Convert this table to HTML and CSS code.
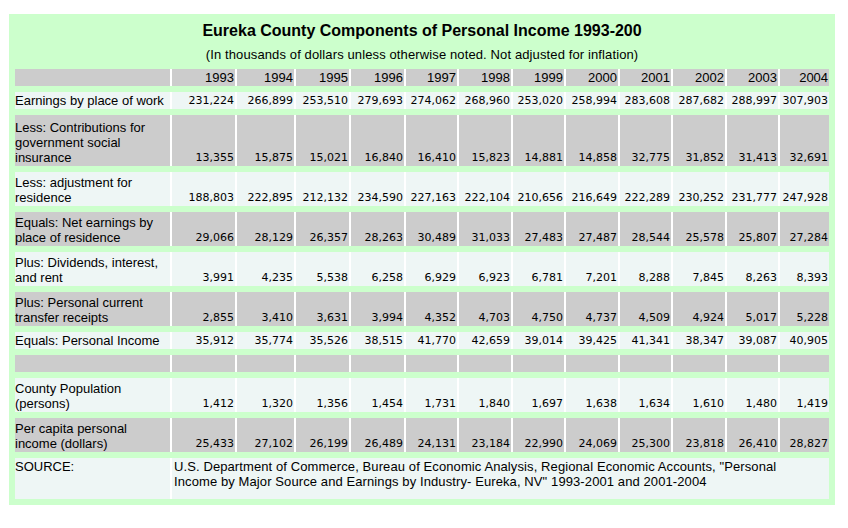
FILE: index.html
```html
<!DOCTYPE html>
<html>
<head>
<meta charset="utf-8">
<title>Eureka County Components of Personal Income</title>
<link rel="stylesheet" href="styles.css">
</head>
<body>
<div class="panel">
<table class="data">
<colgroup>
<col class="c-label"><col class="c-a"><col class="c-b"><col class="c-c"><col class="c-c"><col class="c-d"><col class="c-e"><col class="c-d"><col class="c-e"><col class="c-d"><col class="c-e"><col class="c-d"><col class="c-f">
</colgroup>
<tr class="title-row"><td colspan="13" class="title">Eureka County Components of Personal Income 1993-200</td></tr>
<tr class="sub-row"><td colspan="13" class="subtitle">(In thousands of dollars unless otherwise noted. Not adjusted for inflation)</td></tr>
<tr class="gray h1 head"><td></td><td>1993</td><td>1994</td><td>1995</td><td>1996</td><td>1997</td><td>1998</td><td>1999</td><td>2000</td><td>2001</td><td>2002</td><td>2003</td><td>2004</td></tr>
<tr class="light h1"><th>Earnings by place of work</th><td>231,224</td><td>266,899</td><td>253,510</td><td>279,693</td><td>274,062</td><td>268,960</td><td>253,020</td><td>258,994</td><td>283,608</td><td>287,682</td><td>288,997</td><td>307,903</td></tr>
<tr class="gray h3"><th>Less: Contributions for government social insurance</th><td>13,355</td><td>15,875</td><td>15,021</td><td>16,840</td><td>16,410</td><td>15,823</td><td>14,881</td><td>14,858</td><td>32,775</td><td>31,852</td><td>31,413</td><td>32,691</td></tr>
<tr class="light h2"><th>Less: adjustment for residence</th><td>188,803</td><td>222,895</td><td>212,132</td><td>234,590</td><td>227,163</td><td>222,104</td><td>210,656</td><td>216,649</td><td>222,289</td><td>230,252</td><td>231,777</td><td>247,928</td></tr>
<tr class="gray h2"><th>Equals: Net earnings by place of residence</th><td>29,066</td><td>28,129</td><td>26,357</td><td>28,263</td><td>30,489</td><td>31,033</td><td>27,483</td><td>27,487</td><td>28,544</td><td>25,578</td><td>25,807</td><td>27,284</td></tr>
<tr class="light h2"><th>Plus: Dividends, interest, and rent</th><td>3,991</td><td>4,235</td><td>5,538</td><td>6,258</td><td>6,929</td><td>6,923</td><td>6,781</td><td>7,201</td><td>8,288</td><td>7,845</td><td>8,263</td><td>8,393</td></tr>
<tr class="gray h2"><th>Plus: Personal current transfer receipts</th><td>2,855</td><td>3,410</td><td>3,631</td><td>3,994</td><td>4,352</td><td>4,703</td><td>4,750</td><td>4,737</td><td>4,509</td><td>4,924</td><td>5,017</td><td>5,228</td></tr>
<tr class="light h1"><th>Equals: Personal Income</th><td>35,912</td><td>35,774</td><td>35,526</td><td>38,515</td><td>41,770</td><td>42,659</td><td>39,014</td><td>39,425</td><td>41,341</td><td>38,347</td><td>39,087</td><td>40,905</td></tr>
<tr class="gray h1"><th></th><td></td><td></td><td></td><td></td><td></td><td></td><td></td><td></td><td></td><td></td><td></td><td></td></tr>
<tr class="light h2"><th>County Population (persons)</th><td>1,412</td><td>1,320</td><td>1,356</td><td>1,454</td><td>1,731</td><td>1,840</td><td>1,697</td><td>1,638</td><td>1,634</td><td>1,610</td><td>1,480</td><td>1,419</td></tr>
<tr class="gray h2"><th>Per capita personal income (dollars)</th><td>25,433</td><td>27,102</td><td>26,199</td><td>26,489</td><td>24,131</td><td>23,184</td><td>22,990</td><td>24,069</td><td>25,300</td><td>23,818</td><td>26,410</td><td>28,827</td></tr>
<tr class="light src"><th>SOURCE:</th><td colspan="12" class="source">U.S. Department of Commerce, Bureau of Economic Analysis, Regional Economic Accounts, "Personal<br>Income by Major Source and Earnings by Industry- Eureka, NV" 1993-2001 and 2001-2004</td></tr>
</table>
</div>
</body>
</html>
```
FILE: styles.css
```css
html, body {
  margin: 0;
  padding: 0;
  background: #ffffff;
}

.panel {
  margin: 14px 0 0 9px;
  width: 814px;
  padding: 0 6px;
  background: #ccffcc;
}

.data {
  width: 814px;
  table-layout: fixed;
  border-collapse: separate;
  border-spacing: 0 6px;
  margin: 0;
  font-family: "Liberation Sans", Arial, sans-serif;
  font-size: 13px;
  color: #000;
}

.c-label { width: 157px; }
.c-a { width: 65px; }
.c-b { width: 59px; }
.c-c { width: 55px; }
.c-d { width: 53px; }
.c-e { width: 54px; }
.c-f { width: 49px; }

.data td,
.data th {
  padding: 1px;
  vertical-align: bottom;
  border-right: 2px solid #ffffff;
  font-weight: normal;
  line-height: 15px;
}

.data tr > :last-child {
  border-right: none;
}

.data th {
  text-align: left;
  padding-left: 0;
}

.data td {
  text-align: right;
  white-space: nowrap;
  font-family: "DejaVu Sans", Verdana, sans-serif;
  font-size: 11px;
}

.gray > td, .gray > th { background: #cccccc; }
.light > td, .light > th { background: #eef6f5; }

.h1 { height: 17px; }
.h2 { height: 34px; }
.h3 { height: 51px; }
.src { height: 41px; }

.head > td {
  font-family: "Liberation Sans", Arial, sans-serif;
  font-size: 13px;
}

.title-row { height: 21px; }
.sub-row { height: 16px; }

.data td.title,
.data td.subtitle {
  border-right: none;
  background: transparent;
  text-align: center;
  vertical-align: top;
  font-family: "Liberation Sans", Arial, sans-serif;
  white-space: normal;
}

.data td.title {
  font-size: 16px;
  font-weight: bold;
  line-height: 18px;
  padding: 2px 0 1px;
}

.data td.subtitle {
  font-size: 13px;
  line-height: 15px;
  padding: 0;
  letter-spacing: 0.12px;
}

.src > th,
.data td.source {
  vertical-align: top;
}

.data td.source {
  text-align: left;
  white-space: nowrap;
  font-family: "Liberation Sans", Arial, sans-serif;
  font-size: 13px;
  padding: 1px 2px;
  letter-spacing: 0.1px;
}
```
